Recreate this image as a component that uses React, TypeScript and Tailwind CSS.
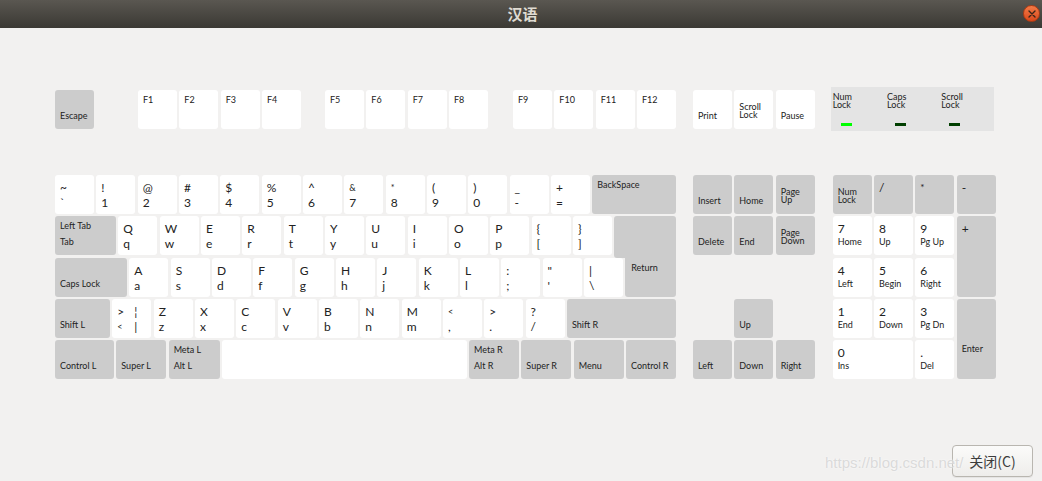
import React from 'react';
import clsx from 'clsx';

type KeyProps = {
  grey?: boolean;
  className?: string;
  children?: React.ReactNode;
};

function Key({ grey, className, children }: KeyProps) {
  return (
    <div
      className={clsx(
        'h-[39px] shrink-0 rounded-[3px] pl-[5px] flex flex-col overflow-hidden text-[#222]',
        grey ? 'bg-[#cccccc]' : 'bg-white',
        className
      )}
    >
      {children}
    </div>
  );
}

// white key with an upper and a lower character
function CharKey({ up, low, smallUp }: { up: string; low: string; smallUp?: boolean }) {
  return (
    <Key className="w-[39px]">
      <span className={clsx('pt-[5px] leading-[15px]', smallUp ? 'text-[9px]' : 'text-[12px]')}>{up}</span>
      <span className="text-[12px] leading-[15px]">{low}</span>
    </Key>
  );
}

// grey key with a single small label at the bottom
function LabelKey({ label, className, top }: { label: string; className?: string; top?: boolean }) {
  return (
    <Key grey className={className ?? 'w-[39px]'}>
      <span className={clsx('text-[9px] leading-[11px] whitespace-nowrap', top ? 'pt-[4px]' : 'pt-[20px]')}>
        {label}
      </span>
    </Key>
  );
}

function TwoKey({ top, bottom, className }: { top: string; bottom: string; className?: string }) {
  return (
    <Key grey className={className}>
      <span className="pt-[4px] text-[9px] leading-[11px] whitespace-nowrap">{top}</span>
      <span className="mt-[5px] text-[9px] leading-[11px] whitespace-nowrap">{bottom}</span>
    </Key>
  );
}

function StackKey({ a, b, grey = true }: { a: string; b: string; grey?: boolean }) {
  return (
    <Key grey={grey} className="w-[39px]">
      <span className="pt-[12.5px] text-[9px] leading-[8px]">{a}</span>
      <span className="text-[9px] leading-[8px]">{b}</span>
    </Key>
  );
}

function NumKey({ num, label, className }: { num: string; label: string; className?: string }) {
  return (
    <Key className={clsx('h-full', className)}>
      <span className="pt-[5px] text-[12px] leading-[15px]">{num}</span>
      <span className="text-[9px] leading-[11px]">{label}</span>
    </Key>
  );
}

function BigTopKey({ label, className, small }: { label: string; className?: string; small?: boolean }) {
  return (
    <Key grey className={clsx('h-full', className)}>
      <span className={clsx('pt-[5px] leading-[15px]', small ? 'text-[10px]' : 'text-[12px]')}>{label}</span>
    </Key>
  );
}

const row1: [string, string][] = [
  ['~', '`'], ['!', '1'], ['@', '2'], ['#', '3'], ['$', '4'], ['%', '5'], ['^', '6'],
  ['&', '7'], ['*', '8'], ['(', '9'], [')', '0'], ['_', '-'], ['+', '='],
];
const row2: [string, string][] = [
  ['Q', 'q'], ['W', 'w'], ['E', 'e'], ['R', 'r'], ['T', 't'], ['Y', 'y'], ['U', 'u'],
  ['I', 'i'], ['O', 'o'], ['P', 'p'], ['{', '['], ['}', ']'],
];
const row3: [string, string][] = [
  ['A', 'a'], ['S', 's'], ['D', 'd'], ['F', 'f'], ['G', 'g'], ['H', 'h'], ['J', 'j'],
  ['K', 'k'], ['L', 'l'], [':', ';'], ['"', "'"], ['|', '\\'],
];
const row4: [string, string][] = [
  ['Z', 'z'], ['X', 'x'], ['C', 'c'], ['V', 'v'], ['B', 'b'], ['N', 'n'], ['M', 'm'],
  ['<', ','], ['>', '.'], ['?', '/'],
];

function FKeys({ names, className }: { names: string[]; className?: string }) {
  return (
    <div className={clsx('flex gap-[2.33px]', className)}>
      {names.map((n) => (
        <Key key={n} className="w-[39px]">
          <span className="pt-[4px] text-[9px] leading-[11px]">{n}</span>
        </Key>
      ))}
    </div>
  );
}

function Led({ a, b, on }: { a: string; b: string; on?: boolean }) {
  return (
    <div className="flex-1 flex flex-col pl-[2px] pt-[6px] text-[#222]">
      <span className="text-[9px] leading-[8px]">{a}</span>
      <span className="text-[9px] leading-[8px]">{b}</span>
      <div className={clsx('ml-[8px] mt-[14px] h-[3px] w-[11px]', on ? 'bg-[#00ff00]' : 'bg-[#003f00]')} />
    </div>
  );
}

export default function App() {
  return (
    <div className="relative flex h-[481px] w-[1042px] flex-col overflow-hidden bg-[#f2f1f0] font-['Lato','Noto_Sans',sans-serif]">
      {/* title bar */}
      <div className="relative flex h-[28px] shrink-0 items-center justify-center bg-linear-to-b from-[#5a5751] to-[#3b3934]">
        <span className="pl-[3px] text-[15px] font-bold text-[#dfdbd2] font-['Noto_Sans_CJK_SC',sans-serif]">汉语</span>
        <div className="absolute right-[2px] top-[5px] flex h-[17px] w-[17px] items-center justify-center rounded-full border border-[#b03a12] bg-linear-to-b from-[#f37a46] to-[#d9481a]">
          <svg width="8" height="8" viewBox="0 0 8 8">
            <path d="M1 1L7 7M7 1L1 7" stroke="#3b2418" strokeWidth="1.4" strokeLinecap="round" />
          </svg>
        </div>
      </div>

      <div className="pl-[55px] pt-[62px]">
        {/* function row */}
        <div className="flex h-[39px] items-start">
          <div className="flex w-[621px]">
            <LabelKey label="Escape" />
            <FKeys names={['F1', 'F2', 'F3', 'F4']} className="ml-[44px]" />
            <FKeys names={['F5', 'F6', 'F7', 'F8']} className="ml-[24px]" />
            <FKeys names={['F9', 'F10', 'F11', 'F12']} className="ml-auto" />
          </div>
          <div className="ml-[17px] flex gap-[2.33px]">
            <Key className="w-[39px]">
              <span className="pt-[20px] text-[9px] leading-[11px]">Print</span>
            </Key>
            <StackKey a="Scroll" b="Lock" grey={false} />
            <Key className="w-[39px]">
              <span className="pt-[20px] text-[9px] leading-[11px]">Pause</span>
            </Key>
          </div>
          <div className="ml-[16px] -mt-[3px] flex h-[44px] w-[163px] bg-[#e4e4e4]">
            <Led a="Num" b="Lock" on />
            <Led a="Caps" b="Lock" />
            <Led a="Scroll" b="Lock" />
          </div>
        </div>

        {/* main block */}
        <div className="mt-[46px] flex items-start">
          <div className="flex w-[621px] flex-col gap-[2.33px]">
            <div className="flex gap-[2.33px]">
              {row1.map(([u, l]) => (
                <CharKey key={u} up={u} low={l} smallUp={u === '&' || u === '*'} />
              ))}
              <LabelKey label="BackSpace" top className="flex-1" />
            </div>
            <div className="flex items-start gap-[2.33px]">
              <TwoKey top="Left Tab" bottom="Tab" className="w-[61px]" />
              {row2.map(([u, l]) => (
                <CharKey key={u} up={u} low={l} />
              ))}
              <div className="-mb-[2.33px] h-[41.33px] flex-1 rounded-t-[3px] rounded-bl-[3px] bg-[#cccccc]" />
            </div>
            <div className="flex gap-[2.33px]">
              <LabelKey label="Caps Lock" className="w-[72px]" />
              {row3.map(([u, l]) => (
                <CharKey key={u} up={u} low={l} />
              ))}
              <Key grey className="flex-1 rounded-t-none">
                <span className="pl-px pt-[4px] text-[9px] leading-[11px]">Return</span>
              </Key>
            </div>
            <div className="flex gap-[2.33px]">
              <LabelKey label="Shift L" className="w-[55px]" />
              <Key className="w-[39px]">
                <div className="flex pt-[5px] text-[12px] leading-[15px]">
                  <span className="w-[17px]">&gt;</span>
                  <span>¦</span>
                </div>
                <div className="flex text-[12px] leading-[15px]">
                  <span className="w-[17px] text-[9px]">&lt;</span>
                  <span>|</span>
                </div>
              </Key>
              {row4.map(([u, l]) => (
                <CharKey key={u} up={u} low={l} smallUp={u === '<'} />
              ))}
              <LabelKey label="Shift R" className="flex-1" />
            </div>
            <div className="flex gap-[2.33px]">
              <LabelKey label="Control L" className="w-[59px]" />
              <LabelKey label="Super L" className="w-[50px]" />
              <TwoKey top="Meta L" bottom="Alt L" className="w-[51px]" />
              <Key className="flex-1" />
              <TwoKey top="Meta R" bottom="Alt R" className="w-[50px]" />
              <LabelKey label="Super R" className="w-[50px]" />
              <LabelKey label="Menu" className="w-[50px]" />
              <LabelKey label="Control R" className="w-[50px]" />
            </div>
          </div>

          {/* navigation cluster */}
          <div className="ml-[17px] grid grid-cols-[repeat(3,39px)] grid-rows-[repeat(5,39px)] gap-[2.33px]">
            <LabelKey label="Insert" />
            <LabelKey label="Home" />
            <StackKey a="Page" b="Up" />
            <LabelKey label="Delete" />
            <LabelKey label="End" />
            <StackKey a="Page" b="Down" />
            <div />
            <div />
            <div />
            <div />
            <LabelKey label="Up" />
            <div />
            <LabelKey label="Left" />
            <LabelKey label="Down" />
            <LabelKey label="Right" />
          </div>

          {/* numeric keypad */}
          <div className="ml-[18px] grid grid-cols-[repeat(4,39px)] grid-rows-[repeat(5,39px)] gap-[2.33px]">
            <StackKey a="Num" b="Lock" />
            <BigTopKey label="/" />
            <BigTopKey label="*" small />
            <BigTopKey label="-" />
            <NumKey num="7" label="Home" />
            <NumKey num="8" label="Up" />
            <NumKey num="9" label="Pg Up" />
            <BigTopKey label="+" className="row-span-2" />
            <NumKey num="4" label="Left" />
            <NumKey num="5" label="Begin" />
            <NumKey num="6" label="Right" />
            <NumKey num="1" label="End" />
            <NumKey num="2" label="Down" />
            <NumKey num="3" label="Pg Dn" />
            <Key grey className="row-span-2 h-full">
              <span className="pt-[44px] text-[9px] leading-[11px]">Enter</span>
            </Key>
            <NumKey num="0" label="Ins" className="col-span-2" />
            <NumKey num="." label="Del" />
          </div>
        </div>
      </div>

      {/* dialog buttons */}
      <div className="mt-auto flex justify-end pb-[4px] pr-[9px]">
        <button className="h-[32px] w-[81px] rounded-[4px] border border-[#b9b6b0] bg-linear-to-b from-[#fbfbfa] to-[#eeedeb] text-[14px] text-[#3c3c3c] font-['Noto_Sans_CJK_SC','Noto_Sans',sans-serif] shadow-[0_1px_0_rgba(0,0,0,0.05)]">
          关闭(C)
        </button>
      </div>

      {/* watermark */}
      <div className="pointer-events-none absolute left-[825px] top-[452px] text-[15px] text-[#d2d2d2]/80 font-['Liberation_Sans',sans-serif] [text-shadow:0_0_2px_#ffffff]">
        https://blog.csdn.net/
      </div>
    </div>
  );
}
